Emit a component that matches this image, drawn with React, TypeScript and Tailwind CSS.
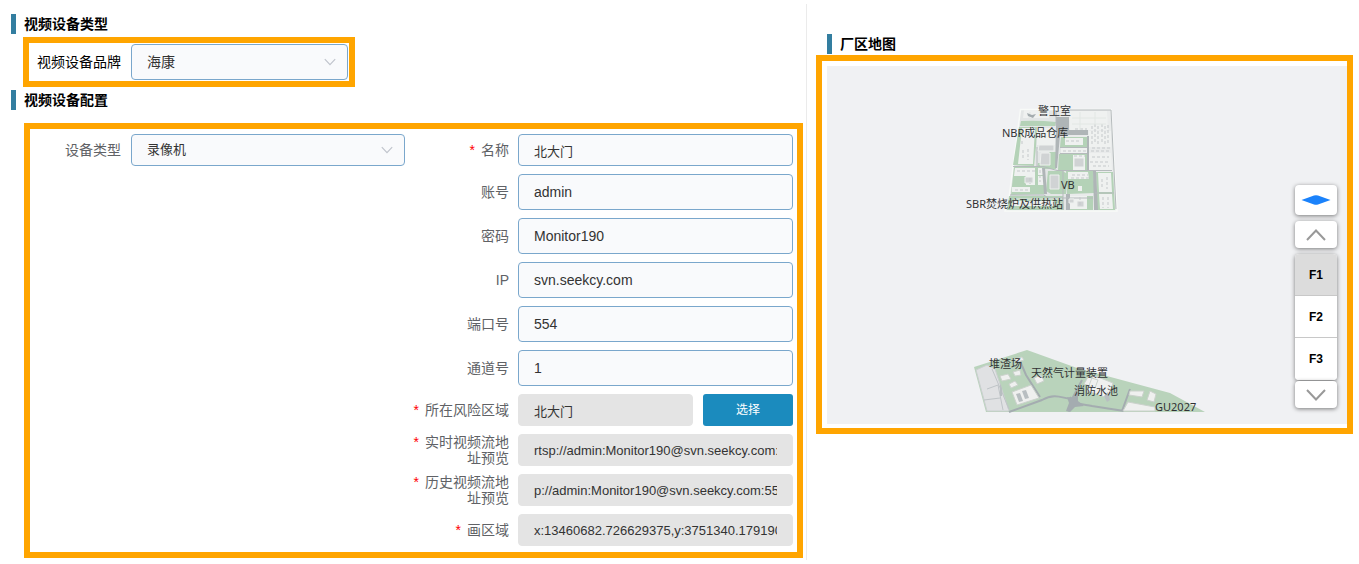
import { useState } from "react";
import type { ReactNode } from "react";

const fieldBase =
  "block w-full min-w-0 rounded-sm px-[15px] text-[#333] outline-none";
const editable = "border border-[#7aa7cc] bg-[#f9fafc]";
const readOnlyStyle = "border border-[#e4e4e4] bg-[#e4e4e4]";

function SectionTitle({ children }: { children: ReactNode }) {
  return (
    <h2 className="border-l-[5px] border-[#337ea0] pl-2 text-sm leading-5 font-bold text-black">
      {children}
    </h2>
  );
}

function Select({ id, value, className }: { id: string; value: string; className: string }) {
  return (
    <div className="relative">
      <select id={id} defaultValue={value} className={`${fieldBase} ${editable} appearance-none ${className}`}>
        <option value={value}>{value}</option>
      </select>
      <svg
        viewBox="0 0 12 8"
        className="pointer-events-none absolute top-1/2 right-3 h-2 w-3 -translate-y-1/2"
        fill="none"
        stroke="#c0c4cc"
        strokeWidth="1.2"
      >
        <path d="M.8 1.200 6 6.600 11.200 1.200" />
      </svg>
    </div>
  );
}

function Label({ id, required, children }: { id: string; required?: boolean; children: ReactNode }) {
  return (
    <label htmlFor={id} className="flex justify-end text-right text-sm leading-4 text-[#606266]">
      {required && <span className="mr-1.5 text-[#f00]">*</span>}
      <span className="max-w-[84px]">{children}</span>
    </label>
  );
}

const accountFields = [
  { id: "account", label: "账号", value: "admin" },
  { id: "password", label: "密码", value: "Monitor190" },
  { id: "ip", label: "IP", value: "svn.seekcy.com" },
  { id: "port", label: "端口号", value: "554" },
  { id: "channel", label: "通道号", value: "1" },
];

const previewFields = [
  { id: "live", label: "实时视频流地址预览", value: "rtsp://admin:Monitor190@svn.seekcy.com:554" },
  { id: "history", label: "历史视频流地址预览", value: "p://admin:Monitor190@svn.seekcy.com:554" },
  { id: "area", label: "画区域", value: "x:13460682.726629375,y:3751340.179190" },
];

const rowClass = "grid grid-cols-[97px_minmax(0,1fr)] items-center gap-[9px]";

function SiteMap() {
  return (
    <svg viewBox="0 0 520 358" className="block w-full" role="img" aria-label="厂区地图">
      <g transform="translate(-827 -66)">
        <path d="M1020.500 109.500H1111L1117 211H1005L1009 198Z" fill="#e3e6e6" stroke="#f8faf8" strokeWidth="1.500" />
        <path d="M1059 110H1110l6 100h-46Z" fill="#e9ebeb" />
        <g fill="#b4d2b7">
          <path d="M1021 121q17-1 35 1l-1 4h-35ZM1019 127h18l-1 20-2 19-21-1ZM1049 152h7v17h-19l1-6h11ZM1014 167h29l2 27-34 1ZM1036 186h8l1 8h-9ZM1048 171h15l4 3-1 20h-15l-5-3ZM1066 171h27l2 22-28 1ZM1061 137h26v10h-27ZM1059 154h28v16h-29ZM1009 196h54l1 14h-57ZM1067 196h26v14h-26ZM1096 172h17l2 38h-18Z" />
        </g>
        <g fill="#eff1f0">
          <path d="M1024 110h25v8h-26ZM1022 128h13l-2 36h-15ZM1037 128h18v17h-18ZM1070 111h37l1 19h-38ZM1089 131h22v16h-22ZM1065 138h18v7h-18ZM1061 148h26v5h-26ZM1073 155h12v15h-12ZM1089 153h22l1 17h-24ZM1015 168h20v8h-21ZM1026 176h9v9h-9ZM1038 168h6v7h-6ZM1038 176h7v9h-7ZM1012 187h18v5h-18ZM1068 172h20l1 7h-21ZM1078 186h4v5h-4ZM1098 173h13l1 19h-13ZM1099 194h13l1 15h-13ZM1067 196h20v13h-20ZM1012 201h42v5h-42Z" />
        </g>
        <g fill="#afb5b7">
          <path d="M1056 117h13v13h19v5h-28l-3 33h-2l1-36ZM1087 136h2v35h-2ZM1066 194h4v16h-4ZM1093 171h3l2 39h-4ZM1042 168h3l2 26h-3Z" />
        </g>
        <path d="M1013 166.500h30l14 4h55M1010 195h34l4 3h45M1060 153.500h27M1060 147.500h27M1063 171v39M1056 110v16M1070 110h41l5 99M1037 147v19M1095 193h19" fill="none" stroke="#b5babc" />
        <g fill="#d0d3d4" stroke="#edf0ee">
          <path d="M1039 145h15v6h-16ZM1041 153h9v12h-10ZM1050 175h9v14h-9ZM1074 158h10v9h-10ZM1025 177h8v6h-8ZM1069 199h5v4h-5ZM1077 201h7v6h-7Z" />
        </g>
        <g fill="none" stroke="#c5c9cb" strokeDasharray="3 2">
          <path d="M1092 126v18M1095 124v20M1098 126v18M1102 124v20M1105 126v18M1108 125v18M1022 141v5M1023 150v8M1028 149v11M1092 157h17M1090 162h19M1093 166h16M1092 148h18M1091 151h20M1072 175h16M1071 178h18M1063 151h24M1066 141h15M1074 156h11M1017 171h18M1015 190h13M1030 178v6M1040 170v12M1102 179v8M1107 177v12M1103 197v11M1108 197v11M1080 197v9M1075 129h12" />
        </g>
        <g fill="none" stroke="#e2e7e4">
          <path d="M1072 118h34M1072 124h34M1080 112v18M1095 112v12M1030 112l-1 6M1014 199h48M1014 204h48" />
        </g>
        <path d="m1027 113 5 2 4-1-3 4-5-2Z" fill="#a4acaf" />

        <path d="m974 367 53-17 50 18 93 25 35 19H986Z" fill="#b9d3bb" />
        <path d="m976 370 11-5 8 4 14 42h-22Z" fill="#e0e1e3" stroke="#cbd0d0" />
        <path d="m987 389 11-4 5 25M984 400l16-2M992 369l17 40" fill="none" stroke="#bfc4c7" />
        <g fill="none" stroke="#a4acb0" strokeWidth="2">
          <path d="m1020 361 6 14 14 22M1009 412l33-12c14-8 21-1 30-1l10-19M1070 397c5 8 13 7 22 9l32 5M1075 399l-7 12M1122 411l8-22" />
        </g>
        <path d="m1067 397 6 1 5-6v9l6 5-9 1-5 5-4-1 3-8Z" fill="#a4acb0" />
        <g fill="#eff0ef" stroke="#cbd2cc">
          <path d="m1012 392 19-7 8 13-22 7ZM1034 378l7-3 3 6-7 3ZM1093 375l20 8-5 15-21-7ZM1088 377l10 3-3 8-11-4ZM1130 391h14l-2 6-13-2ZM1150 391l6 3-2 8-7-2ZM1128 402l27 5v4h-32ZM1000 376l8-2 3 5-9 2ZM1009 384l6-3 3 4-7 3ZM1013 372l7-2 1 5-6 1ZM1015 359l7-2 2 3-7 2Z" />
        </g>
        <g fill="#b8bec1">
          <path d="m1016 394 4-1 3 8-4 1ZM1022 391l4-1 3 8-4 1ZM1104 396l4-4 2 8-3 2ZM1000 383l2 5v8h-2Z" />
        </g>

        <g fill="#303133" fontSize="11" fontFamily='"Noto Sans", "Noto Sans CJK SC", sans-serif'>
          <text x="1038" y="115">警卫室</text>
          <text x="1002" y="137">NBR成品仓库</text>
          <text x="1061" y="189">VB</text>
          <text x="966" y="208">SBR焚烧炉及供热站</text>
          <text x="989" y="368">堆渣场</text>
          <text x="1031" y="377">天然气计量装置</text>
          <text x="1074" y="395">消防水池</text>
          <text x="1155" y="411">GU2027</text>
        </g>
      </g>
    </svg>
  );
}

function Chevron({ up }: { up?: boolean }) {
  return (
    <svg viewBox="0 0 20 12" className="h-3 w-5" fill="none" stroke="#999" strokeWidth="2">
      <path d={up ? "M1 11 10 1.500 19 11" : "M1 1 10 10.500 19 1"} />
    </svg>
  );
}

const mapButton =
  "flex w-[42px] items-center justify-center rounded-[4px] bg-white shadow-[0_1px_4px_rgba(0,0,0,0.5)]";

function FloorControl() {
  const [floor, setFloor] = useState("F1");
  return (
    <div className="absolute right-[10px] bottom-4 flex flex-col">
      <button type="button" aria-label="切换视角" className={`${mapButton} mb-[6px] h-[30px]`}>
        <svg viewBox="0 0 30 10" className="h-[10px] w-[30px]" fill="#1b82fb">
          <path d="M.5 5 13 .4Q15 0 17 .4L29.500 5 17 9.600Q15 10 13 9.600Z" />
        </svg>
      </button>
      <button type="button" aria-label="上一层" className={`${mapButton} mb-[6px] h-[27px]`}>
        <Chevron up />
      </button>
      <div className="mb-px w-[42px] divide-y divide-[#c8c8c8] overflow-hidden rounded-[4px] bg-white shadow-[0_1px_4px_rgba(0,0,0,0.5)]">
        {["F1", "F2", "F3"].map((name) => (
          <button
            key={name}
            type="button"
            aria-pressed={floor === name}
            onClick={() => setFloor(name)}
            className={`block h-[42px] w-full text-xs font-bold text-black ${floor === name ? "bg-[#dcdcdc]" : "bg-white"}`}
          >
            {name}
          </button>
        ))}
      </div>
      <button type="button" aria-label="下一层" className={`${mapButton} h-[27px]`}>
        <Chevron />
      </button>
    </div>
  );
}

export default function App() {
  return (
    <main className="grid min-h-[564px] grid-cols-[807fr_552fr] bg-white font-['Liberation_Sans','Noto_Sans_CJK_SC',sans-serif]">
      <section className="mt-1 mb-1 border-r border-[#ebebeb] pr-[3px] pl-[11px]">
        <div className="pt-[10px]">
          <SectionTitle>视频设备类型</SectionTitle>
        </div>
        <div className="mt-[3px] ml-3 flex w-[332px] items-center gap-[9px] border-[6px] border-[#ffa500] py-px pr-px pl-2">
          <label htmlFor="brand" className="w-[85px] shrink-0 text-sm text-black">视频设备品牌</label>
          <div className="min-w-0 flex-1">
            <Select id="brand" value="海康" className="h-9 text-sm" />
          </div>
        </div>
        <div className="mt-[3px]">
          <SectionTitle>视频设备配置</SectionTitle>
        </div>
        <form className="mt-[13px] ml-[13px] grid grid-cols-[375fr_381fr] gap-x-[7px] border-[6px] border-[#ffa500] pt-[5px] pr-1 pb-[6px]">
          <div className="grid h-8 grid-cols-[91px_minmax(0,1fr)] items-center gap-[10px]">
            <Label id="type">设备类型</Label>
            <Select id="type" value="录像机" className="h-8 text-[13px]" />
          </div>
          <div className="flex flex-col gap-2">
            <div className={rowClass}>
              <Label id="name" required>名称</Label>
              <input id="name" defaultValue="北大门" className={`${fieldBase} ${editable} h-8 text-[13px]`} />
            </div>
            {accountFields.map((f) => (
              <div key={f.id} className={rowClass}>
                <Label id={f.id}>{f.label}</Label>
                <input id={f.id} defaultValue={f.value} className={`${fieldBase} ${editable} h-9 text-sm`} />
              </div>
            ))}
            <div className={rowClass}>
              <Label id="risk" required>所在风险区域</Label>
              <div className="flex gap-[10px]">
                <input id="risk" readOnly value="北大门" className={`${fieldBase} ${readOnlyStyle} h-8 flex-1 text-[13px]`} />
                <button type="button" className="h-8 w-[90px] shrink-0 rounded-[3px] bg-[#1b8bbe] text-xs text-white">
                  选择
                </button>
              </div>
            </div>
            {previewFields.map((f) => (
              <div key={f.id} className={rowClass}>
                <Label id={f.id} required>{f.label}</Label>
                <input id={f.id} readOnly value={f.value} className={`${fieldBase} ${readOnlyStyle} h-8 text-[13px]`} />
              </div>
            ))}
          </div>
        </form>
      </section>
      <section className="pt-[34px] pr-[6px] pl-[9px]">
        <div className="ml-[11px]">
          <SectionTitle>厂区地图</SectionTitle>
        </div>
        <div className="mt-px border-[6px] border-[#ffa500] pt-[5px] pb-1 pl-[5px]">
          <div className="relative bg-[#f0f1f3]">
            <SiteMap />
            <FloorControl />
          </div>
        </div>
      </section>
    </main>
  );
}
